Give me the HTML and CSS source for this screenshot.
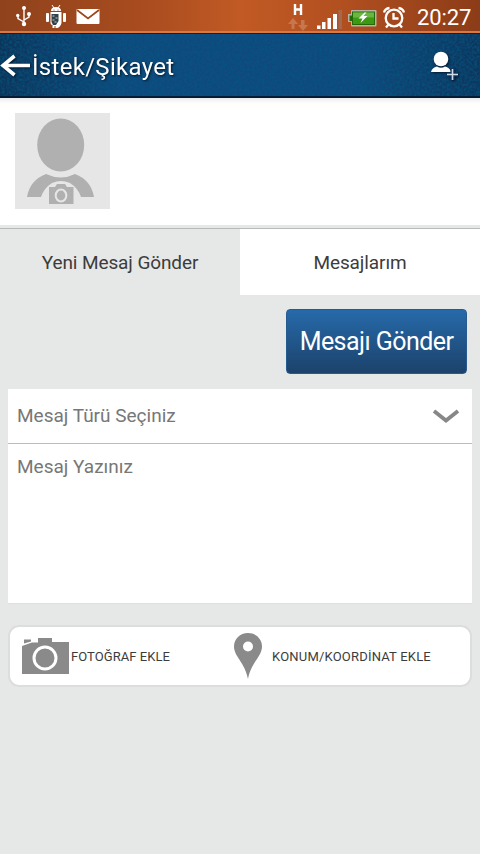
FILE: index.html
```html
<!DOCTYPE html>
<html lang="tr">
<head>
<meta charset="utf-8">
<title>İstek/Şikayet</title>
<link rel="stylesheet" href="styles.css">
</head>
<body>
<div class="status">
  <svg class="notifications" width="110" height="31" viewBox="0 0 110 31">
    <g fill="none" stroke="#fff" stroke-width="1.4"><path d="M24 8v16M24 22l-6-3.500v-3M24 20l5-3v-3"/></g>
    <g fill="#fff"><circle cx="24" cy="8" r="2"/><circle cx="24" cy="24" r="2.200"/><circle cx="17.700" cy="15.500" r="1.700"/><circle cx="29" cy="14" r="2"/>
    <path d="M51 11q0-4 5-4t5 4zM50.500 12h11v11q-1 4-4 5h-2v-2h-1v2h-2v-3q-2 0-2-2z"/><rect x="46" y="13" width="3" height="9" rx="1"/><rect x="63" y="13" width="3" height="9" rx="1"/></g>
    <path d="M52 5l2 3m6-3l-2 3" stroke="#fff"/><path d="M51.500 14h7v7l-2.500 4h-3l-1.500-3z" fill="#31424b"/><path d="M52.500 16h2m1 2h2m-5 2h2m0 2h2" stroke="#c6cdcb"/><circle cx="54" cy="10" r=".6" fill="#8f3f18"/><circle cx="58" cy="10" r=".6" fill="#8f3f18"/>
    <rect x="76.500" y="9" width="23" height="15" rx="1" fill="#fff"/><path d="M77 10l11 8.500L99 10" fill="none" stroke="#9b4519" stroke-width="1.700"/>
  </svg>
  <svg class="indicators" width="130" height="31" viewBox="280 0 130 31">
    <path d="M291.500 29v-5h-3.500l5-6 5 6h-3.500v5zM301 20v5h-3l5 6 5-6h-3.500v-5z" fill="#c57850"/>
    <path d="M295 4v11M301 4v11M295 9.500h6" fill="none" stroke="#fff" stroke-width="2.400"/>
    <g fill="#fff"><rect x="317" y="25.500" width="3.500" height="3.500"/><rect x="322" y="22" width="3.500" height="7"/><rect x="327.500" y="18" width="3.500" height="11"/><rect x="333" y="14" width="4" height="15"/></g>
    <rect x="338.500" y="10" width="3.500" height="19" fill="#a16a50"/>
    <rect x="351" y="10" width="25.500" height="16.500" rx="1" fill="#b9b3a7"/><rect x="348" y="14" width="4" height="8" fill="#b9b3a7"/><path d="M349.500 15.500h2.500v-4h23v13.500h-23v-4h-2.500z" fill="#246a09"/>
    <rect x="353" y="12.500" width="21" height="11.500" fill="#3d9914"/><rect x="353" y="12.500" width="21" height="5" fill="#69b642"/><path d="M364.500 12.500l-6 6h4l-2 4.500 7-7h-4l3-3.500z" fill="#fff"/>
    <g fill="none" stroke="#fff" stroke-width="2.300"><circle cx="394" cy="18" r="8.300"/><path d="M393.500 13v5.500h5M388.500 24.500l-2.500 3M399.500 24.500l2.500 3M384 12.500q1-4 5.500-4.500M404 12.500q-1-4-5.500-4.500"/></g>
  </svg>
  <span class="clock">20:27</span>
</div>
<header class="header">
  <svg class="texture" width="480" height="62"><filter id="grain" x="0" y="0" width="100%" height="100%"><feTurbulence type="fractalNoise" baseFrequency=".4" numOctaves="2" seed="4"/><feColorMatrix values="0 0 0 0 0  0 0 0 0 .1  0 0 0 0 .22  1.500 0 0 0 -.5"/></filter><rect width="480" height="62" filter="url(#grain)"/></svg>
  <svg class="back" width="32" height="30" viewBox="0 0 32 30"><path d="M2 15.500h28M14.500 6L3 15.500 14.500 25" fill="none" stroke="#fff" stroke-width="3.600"/></svg>
  <h1 class="title">İstek/Şikayet</h1>
  <svg class="add-user" width="32" height="32" viewBox="0 0 32 32"><circle cx="13" cy="10" r="7.300" fill="#fff"/><path d="M3 23q1-4.500 6-5.500 4 2.500 8 0 5 1 6 5.500z" fill="#fff"/><path d="M24.500 19v12M19 25.500h11" stroke="#123a61" stroke-width="4"/><path d="M24.500 20v11M19 25.500h11" stroke="#cbdbe7" stroke-width="1.600"/></svg>
</header>
<section class="profile">
  <svg class="avatar" width="96" height="97" viewBox="0 0 96 97"><rect width="95" height="96" fill="#e6e6e6"/><ellipse cx="45.700" cy="32" rx="23.500" ry="26.500" fill="#b0b0b0"/><path d="M12 84Q15 67 31 61q15 7 29 0 16 6 19 23H66q-3-9-11-14-9-4-18 0-8 5-11 14z" fill="#b0b0b0"/><path d="M34 74h6l2-3h8l2 3h6.500v17H34z" fill="#b0b0b0"/><ellipse cx="46" cy="82.500" rx="5.300" ry="6" fill="none" stroke="#e6e6e6" stroke-width="2"/></svg>
</section>
<nav class="tabs"><div class="tab"><span class="tab-new">Yeni Mesaj Gönder</span></div><div class="tab other"><span class="tab-mine">Mesajlarım</span></div></nav>
<main class="content">
  <button class="send"><span class="send-label">Mesajı Gönder</span></button>
  <div class="form">
    <div class="select"><span class="type-label">Mesaj Türü Seçiniz</span><svg width="28" height="18" viewBox="0 0 28 18"><path d="M2 4l12 9.500L26 4" fill="none" stroke="#878787" stroke-width="3.800"/></svg></div>
    <div class="message"><span class="message-label">Mesaj Yazınız</span></div>
  </div>
  <div class="attachments">
    <div class="attach photo"><svg width="47" height="37" viewBox="0 0 47 37"><path d="M0 8l10-3.500h6V0h14v4h17v32H0z" fill="#8a8a8a"/><path d="M2 1.500h7v2L2 5.500z" fill="#8a8a8a"/><circle cx="23" cy="20" r="11" fill="none" stroke="#fff" stroke-width="3"/></svg><span class="photo-label">FOTOĞRAF EKLE</span></div>
    <div class="attach location"><svg width="28" height="46" viewBox="0 0 28 46"><path fill-rule="evenodd" d="M14 0C6 0 0 6 0 13.500c0 10 11 16 14 32.500 3-16.500 14-22.500 14-32.500C28 6 22 0 14 0zm0 8.500a5 5 0 110 10 5 5 0 010-10z" fill="#8a8a8a"/></svg><span class="location-label">KONUM/KOORDİNAT EKLE</span></div>
  </div>
</main>
</body>
</html>
```
FILE: styles.css
```css
* { box-sizing: border-box; }
body { margin: 0; width: 480px; height: 854px; overflow: hidden; background: #e6e8e7; color: #3c3c3c; font-family: Roboto, "Liberation Sans", sans-serif; }
svg { display: block; flex: none; }
span, h1 { white-space: nowrap; }
.status { height: 34px; display: flex; background: linear-gradient(#0000 0 31px, #d87843 31px 33px, #052444 33px), linear-gradient(90deg, #8f421c, #a94c1f 30%, #c15a24 50%, #b35020 70%, #8b3c18); }
.indicators { margin-left: 170px; }
.clock { color: #fff; font-size: 22px; line-height: 35px; margin-left: 7px; letter-spacing: -.1px; }
.header { position: relative; height: 64px; display: flex; align-items: center; background: linear-gradient(90deg, #0d3359, #10487d 25%, #10487d 75%, #0d355d); border-bottom: 2px solid #041c35; color: #fff; }
.texture { position: absolute; inset: 0; }
.back, .title, .add-user { position: relative; filter: drop-shadow(1px 1px 1px #03172b); }
.title { margin: 3px 0 0; font-size: 24px; line-height: 30px; font-weight: 400; letter-spacing: .3px; }
.add-user { margin-left: auto; margin-right: 20px; }
.profile { height: 131px; padding: 15px; background: linear-gradient(#e9ecee, #fdfdfc 5px, #fff 12px); border-bottom: 1px solid #b8baba; box-shadow: inset 0 -3px #e5e8e7; }
.tabs { height: 66px; display: flex; font-size: 19px; letter-spacing: -.1px; }
.tab { flex: 1; display: flex; align-items: center; justify-content: center; padding-top: 1px; }
.other { background: #fff; }
.content { padding: 14px 8px 0; display: flex; flex-direction: column; }
.send { align-self: flex-end; width: 181px; height: 65px; margin-right: 5px; padding: 0; border: 1px solid #255b8e; border-radius: 4px; background: linear-gradient(#266aaa, #1c426b); color: #fff; font: 25px/30px Roboto, sans-serif; letter-spacing: -.55px; }
.form { margin-top: 15px; height: 215px; background: #fff; color: #777; font-size: 19px; letter-spacing: 0; border-bottom: 1px solid #dedfdf; }
.select { height: 55px; display: flex; justify-content: space-between; align-items: center; padding: 0 12px 0 9px; border-bottom: 1px solid #bcbcbc; }
.type-label { margin-bottom: 1px; }
.message { padding: 12px 9px; line-height: 21px; }
.attachments { margin-top: 21px; height: 62px; display: flex; align-items: center; background: #fff; border: 2px solid #dbdedd; border-radius: 11px; font-size: 13px; }
.attach { display: flex; align-items: center; }
.photo { width: 224px; padding-left: 12px; gap: 2px; letter-spacing: .07px; }
.location { gap: 10px; letter-spacing: .2px; }
```
